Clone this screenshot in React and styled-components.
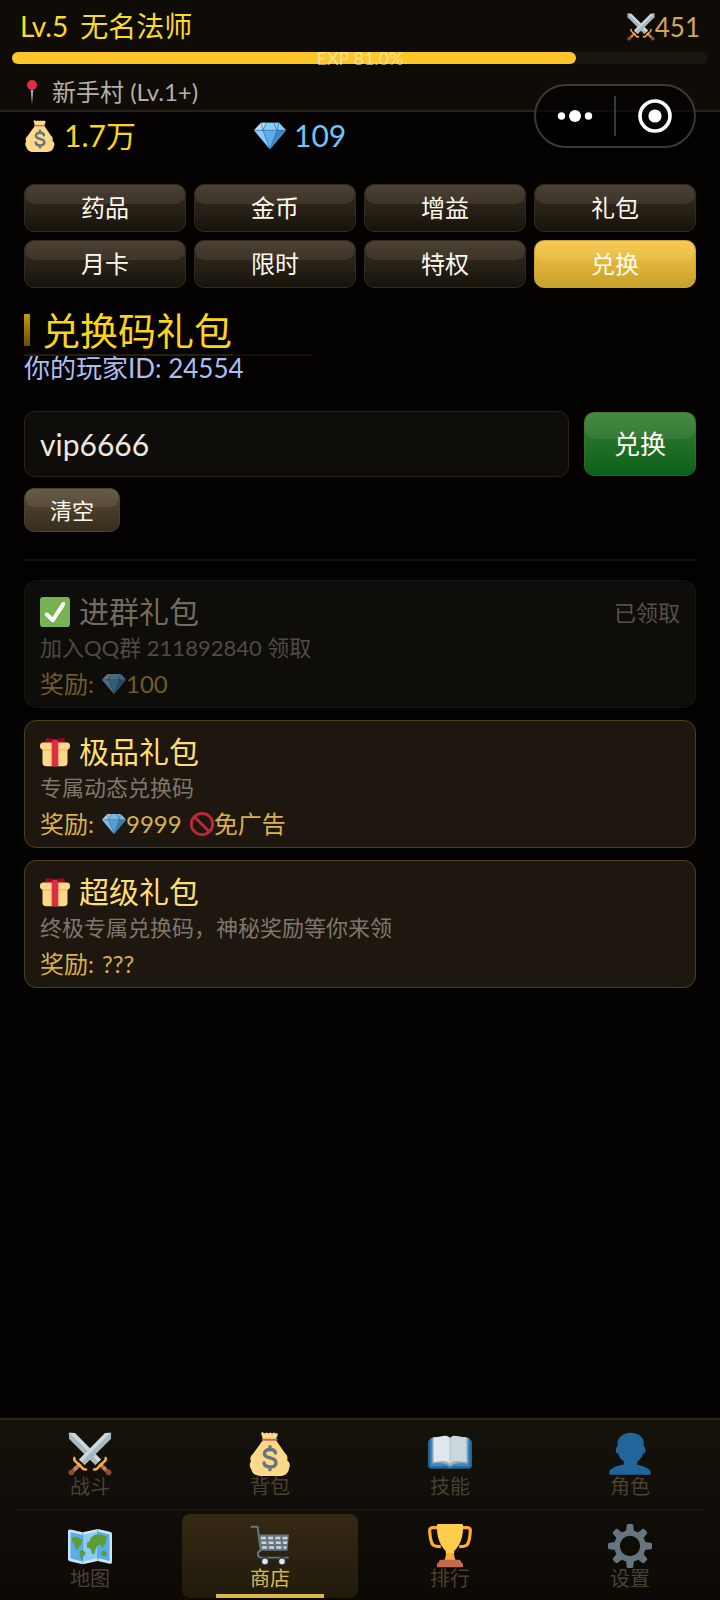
import { useState } from "react"
import styled, { createGlobalStyle, css } from "styled-components"

const GlobalStyle = createGlobalStyle`
  * {
    box-sizing: border-box;
  }

  body {
    margin: 0;
    background: #030201;
    font-family: Lato, 'Noto Sans CJK SC', sans-serif;
  }

  h1, h2, h3, p, ul {
    margin: 0;
    padding: 0;
    font-weight: 400;
  }

  button, input {
    font-family: inherit;
  }
`

const Sword = () => (
  <>
    <path fill="#8899A6" d="M.7.7 5.6.9 27 22.4 22.4 27 .9 5.6z" />
    <path fill="#CCD6DD" d="M.7.7 5.6.9 27 22.4l-2.3 2.3z" />
    <path fill="#AAB8C2" d="M.7.7 24.7 24.7 22.4 27 .9 5.6z" />
    <path fill="none" stroke="#BE6C52" strokeWidth="3.2" d="m25.8 25.8 6.6 6.6" />
    <path fill="none" stroke="#D99E82" strokeWidth="1" d="m26.4 28.6 2.2-2.2M28.6 30.8l2.2-2.2" />
    <path fill="none" stroke="#FFAC33" strokeWidth="2" strokeLinecap="round" d="M30.8 21.200c.6 1.800-.2 2.600-1.800 3.600l-3.800 3.600c-1 1.800-2 2.600-4 2.200" />
    <circle fill="#8A4B38" cx="33.2" cy="33" r="2.4" />
  </>
)

const drawings = {
  swords: (
    <>
      <Sword />
      <g transform="matrix(-1 0 0 1 36 0)"><Sword /></g>
    </>
  ),
  bag: (
    <>
      <path fill="#FDD888" d="M12.4 6.6 10.8 1.4c-.2-.9.8-1.5 1.6-.9l1.4.7L15.400.5l1.5.7 1.400-.7 1.500.7 1.500-.7 1.500.7c1-.5 1.800.1 1.500 1l-1.600 4.400c2.800 3.600 4.800 7 7.600 10.800 2.400 1.800 2.200 4.400 1.700 6 2.600 1.800 2.700 4.400 1.600 6.200-.4 4.400-3.800 6.400-7.400 6.400H10.200c-3.400 0-6.800-1.800-7.600-5.600-1.600-2-1.500-4.600-.2-6.200-1-2.500-.4-4.600 1.600-6.200C7 14.200 9.400 10.200 12.400 6.600z" />
      <path fill="none" stroke="#BF6952" strokeWidth="1.6" strokeLinecap="round" d="M12 6.300h11.400" />
      <path fill="none" stroke="#67757F" strokeWidth="2.800" strokeLinecap="round" d="M22.500 17.200c-.3-1.900-2.200-2.900-4.500-2.900-2.700 0-4.600 1.200-4.600 3.300 0 2.300 2.200 3 4.700 3.600 2.600.6 4.800 1.400 4.800 3.900 0 2.300-2 3.500-4.800 3.500-2.600 0-4.700-1-5-3.200M18 12v2M18 28.800v2" />
    </>
  ),
  gem: (
    <>
      <path fill="#5DADEC" d="M8 3h20l8 8.600L18 33 0 11.600z" />
      <path fill="#BDDDF4" d="M8 3 0 11.600h10zM8 3l2 8.600L14 3z" />
      <path fill="#8CCAF7" d="M14 3h8l4 8.600H10zM22 3h6l8 8.600H26z" />
      <path fill="#8CCAF7" d="M0 11.600h10L18 33z" />
      <path fill="#4289C1" d="M36 11.600H26L18 33z" />
      <path fill="none" stroke="#226699" strokeWidth=".7" d="M0 11.600h36M8 3l2 8.600L18 33l8-21.400L28 3M14 3l-4 8.600M22 3l4 8.600" />
    </>
  ),
  pin: (
    <>
      <path fill="#99AAB5" d="m16 15 2 21 2-21z" />
      <path fill="#66757F" d="m17.200 25 .8 11 .8-11z" />
      <circle fill="#DD2E44" cx="18" cy="7.500" r="7.500" />
    </>
  ),
  check: (
    <>
      <rect fill="#77B255" width="36" height="36" rx="4" />
      <path fill="#FFF" d="M29.280 6.362c-1.156-.751-2.704-.422-3.458.736L14.936 23.877l-5.029-4.650c-1.014-.938-2.596-.875-3.533.138-.937 1.014-.875 2.596.139 3.533l7.209 6.666c.48.445 1.090.665 1.696.665.673 0 1.534-.282 2.099-1.139.332-.506 12.500-19.270 12.500-19.270.751-1.159.421-2.707-.737-3.458z" />
    </>
  ),
  gift: (
    <>
      <path fill="#A0041E" d="M18 8C14 8.500 9 8.500 6.500 6.500 5.200 5 7 1.800 9.200 1c1.200-.3 1.700 1.200 3 1 1.600-.4 3.500-.8 5.800 3.500 2.300-4.300 4.200-3.900 5.800-3.500 1.300.2 1.800-1.300 3-1C29 1.800 30.800 5 29.500 6.500 27 8.500 22 8.500 18 8z" />
      <path fill="#FDD888" d="M3 11h30v20a4 4 0 0 1-4 4H7a4 4 0 0 1-4-4z" />
      <path fill="#FCAB40" d="M3 14h30v2H3z" />
      <rect fill="#FDD888" y="6.500" width="36" height="8.500" rx="4" />
      <path fill="#DA2F47" d="M14 6.500c1-4.500 7-4.500 8 0V35h-8z" />
    </>
  ),
  ban: (
    <path fill="none" stroke="#CF2840" strokeWidth="4.400" d="M6.500 7 29 29.500M34 18a16 16 0 1 1-32 0 16 16 0 0 1 32 0z" />
  ),
  book: (
    <>
      <rect fill="#226699" y="6" width="36" height="24" rx="3" />
      <path fill="#3B88C3" d="M2 5h32v23H20c-1 1.600-3 1.600-4 0H2z" />
      <path fill="#99AAB5" d="M3.500 4.500h29V26c-5-1-10-1-14.500 2-4.500-3-9.500-3-14.500-2z" />
      <path fill="#E1E8ED" d="M4.500 4.300C9 4.500 13 2.500 15.500 3.300c1.500.3 2.500 1.300 2.500 2.700v20c-4-4-9-1.500-13.500-1.500z" />
      <path fill="#CCD6DD" d="M31.500 4.300C27 4.500 23 2.500 20.500 3.300 19 3.600 18 4.600 18 6v20c4-4 9-1.500 13.500-1.500z" />
      <path fill="none" stroke="#AAB8C2" strokeWidth=".6" d="M18 5v22" />
    </>
  ),
  person: (
    <path fill="#226699" d="M24 26.799v-2.566c2-1.348 4.080-3.779 4.703-6.896.186.103.206.17.413.17.991 0 1.709-1.287 1.709-2.873 0-1.562-.823-2.827-1.794-2.865.187-.674.293-1.577.293-2.735C29.324 5.168 26 .527 18.541.527c-6.629 0-10.777 4.641-10.777 8.507 0 1.123.069 2.043.188 2.755-.911.137-1.629 1.352-1.629 2.845 0 1.587.804 2.873 1.796 2.873.206 0 .025-.067.209-.17C8.952 20.453 11 22.885 13 24.232v2.414c-5 .645-12 3.437-12 6.230v1.061C1 35 2.076 35 3.137 35h29.725C33.924 35 35 35 35 33.938v-1.061c0-2.615-6-5.225-11-6.078z" />
  ),
  map: (
    <>
      <path fill="#CCE4F3" d="M2 4.500 12 6.800 24.300 4l10 2.300c1 .3 1.700.9 1.700 2V31c0 1.200-.8 1.700-2 1.500l-9.700-2.200L12 33 1.500 30.500C.5 30.200 0 29.700 0 28.500V6c0-1.200.8-1.800 2-1.500z" />
      <path fill="#5DADEC" d="M2 6.500 12 9v21.600L2 28.200zM24.300 6.200 34 8.600v21.600l-9.700-2.300z" />
      <path fill="#8CCAF7" d="M12 9l12.300-2.800v21.700L12 30.600z" />
      <path fill="#5C9E31" d="M3.200 11c2.500-1 4.500-.3 6 .2l3.300 2.600-1.800 1 .8 1.700-2.500 2-1 3.200-2-1.500-.6-3.400-2.400-2.600zM9.600 21l3.600 1 1.300 2.200-2.300 2.600-.8 3-1.700-3.500zM15.500 15.500l2.200-1.300 1-3 3-2.200 2.600-.6 4 .5 4.200 1.700-1.600 2.300.3 2.800-2 1.600-1 3-1.600-3.500-2.300.5-1.600 3.200-1.200 4.300-1.800-.2-1-4-3.200-1.500zM27.500 22.500l2.600-.8 1.800 2.300-.8 2.600-2.800-.7-1.200-1.400z" />
      <path fill="none" stroke="#3B88C3" strokeWidth=".5" d="M12 7v26M24.300 4v26" />
    </>
  ),
  cart: (
    <>
      <path fill="none" stroke="#66757F" strokeWidth="1.600" strokeLinejoin="round" d="M2.200 2.200h5.600l2.600 19.500c-3 .7-3.400 5.600.6 5.800h22.300" />
      <path fill="#66757F" d="M8.700 8.500h24.800l-1.200 13.300H10.500z" />
      <path fill="none" stroke="#CCD6DD" strokeWidth="2.100" strokeDasharray="4 1.900" d="M10.600 11.400h21.800M11 15.400h21M11.400 19.300h20" />
      <circle fill="#E1E8ED" stroke="#292F33" strokeWidth="1.200" cx="13.900" cy="30.600" r="2.900" />
      <circle fill="#E1E8ED" stroke="#292F33" strokeWidth="1.200" cx="27.800" cy="30.600" r="2.900" />
    </>
  ),
  trophy: (
    <>
      <path fill="none" stroke="#FFAC33" strokeWidth="2.600" d="M9.500 3H3.800C2 3 1.200 4 1.400 6c.3 5 1 9 2.600 11 1 1.200 2.600 1.500 6.500 1.500M26.500 3h5.700c1.800 0 2.600 1 2.400 3-.3 5-1 9-2.600 11-1 1.200-2.600 1.500-6.500 1.500" />
      <path fill="#FFAC33" d="M15 20h6c0 4 .3 7 1.800 10h-9.600c1.500-3 1.800-6 1.800-10z" />
      <path fill="#FFCC4D" d="M7.300 1.200C7.300.4 8 0 9 0h18c1 0 1.700.4 1.700 1.200C29 12 25.500 18 21.500 22v2h-7v-2C10.500 18 7 12 7.300 1.200z" />
      <path fill="#C1694F" d="M11 29.300h14c1.400 0 2.200.8 2.200 2.300 1 .3 1.500 1 1.500 2v1.700H7.300v-1.700c0-1 .5-1.700 1.500-2 0-1.500.8-2.300 2.200-2.300z" />
    </>
  ),
  gear: (
    <>
      <circle fill="none" stroke="#66757F" strokeWidth="4.600" cx="18" cy="18" r="10.600" />
      {[0, 45, 90, 135, 180, 225, 270, 315].map((angle) => (
        <path key={angle} fill="#66757F" transform={`rotate(${angle} 18 18)`} d="M14.600 7.500 15.300 1.300C15.400.4 16 0 16.600 0h2.800c.6 0 1.200.4 1.300 1.300l.7 6.200z" />
      ))}
    </>
  ),
}

const Emoji = ({ name, size }) => (
  <EmojiSvg viewBox="0 0 36 36" width={size} height={size} aria-hidden="true">
    {drawings[name]}
  </EmojiSvg>
)

const tabs = ['药品', '金币', '增益', '礼包', '月卡', '限时', '特权', '兑换']

const gifts = [
  { name: '进群礼包', desc: '加入QQ群 211892840 领取', gem: '100', claimed: true },
  { name: '极品礼包', desc: '专属动态兑换码', gem: '9999', noAds: true },
  { name: '超级礼包', desc: '终极专属兑换码，神秘奖励等你来领' },
]

const navRows = [
  [['swords', '战斗'], ['bag', '背包'], ['book', '技能'], ['person', '角色']],
  [['map', '地图'], ['cart', '商店'], ['trophy', '排行'], ['gear', '设置']],
]

const GiftCard = ({ gift }) => (
  <Card $claimed={gift.claimed}>
    <CardHead>
      <Emoji name={gift.claimed ? 'check' : 'gift'} size={30} />
      <CardName $claimed={gift.claimed}>{gift.name}</CardName>
      {gift.claimed && <CardState>已领取</CardState>}
    </CardHead>
    <CardDesc $claimed={gift.claimed}>{gift.desc}</CardDesc>
    <Reward $claimed={gift.claimed}>
      <span>奖励:</span>
      {gift.gem ? (
        <RewardItem><Emoji name="gem" size={24} />{gift.gem}</RewardItem>
      ) : (
        <RewardItem>???</RewardItem>
      )}
      {gift.noAds && <RewardItem><Emoji name="ban" size={24} />免广告</RewardItem>}
    </Reward>
  </Card>
)

const App = () => {
  const [tab, setTab] = useState('兑换')
  const [page, setPage] = useState('商店')
  const [code, setCode] = useState('vip6666')
  const exp = 81

  const handleSubmit = (e) => {
    e.preventDefault()
  }

  return (
    <Screen>
      <GlobalStyle />
      <Header>
        <PlayerRow>
          <PlayerName><span>Lv.5</span> <span>无名法师</span></PlayerName>
          <Power><Emoji name="swords" size={28} />451</Power>
        </PlayerRow>
        <ExpBar>
          <ExpFill style={{ width: `${exp}%` }} />
          <ExpText>EXP {exp.toFixed(1)}%</ExpText>
        </ExpBar>
        <Place><Emoji name="pin" size={24} />新手村 (Lv.1+)</Place>
      </Header>

      <Capsule>
        <CapsuleButton type="button" aria-label="更多">
          <svg width="36" height="36" viewBox="0 0 36 36" fill="#fff">
            <circle cx="4.500" cy="18" r="3.700" />
            <circle cx="18" cy="18" r="6" />
            <circle cx="31.500" cy="18" r="3.700" />
          </svg>
        </CapsuleButton>
        <CapsuleLine />
        <CapsuleButton type="button" aria-label="关闭">
          <svg width="36" height="36" viewBox="0 0 36 36" fill="#fff">
            <circle cx="18" cy="18" r="15" fill="none" stroke="#fff" strokeWidth="3.600" />
            <circle cx="18" cy="18" r="6.600" />
          </svg>
        </CapsuleButton>
      </Capsule>

      <Main>
        <Wallet>
          <Coins><Emoji name="bag" size={32} /><span>1.7万</span></Coins>
          <Coins $gem><Emoji name="gem" size={32} /><span>109</span></Coins>
        </Wallet>

        <Tabs>
          {tabs.map((name) => (
            <TabButton key={name} type="button" $active={name === tab} onClick={() => setTab(name)}>
              {name}
            </TabButton>
          ))}
        </Tabs>

        <Title>兑换码礼包</Title>
        <PlayerId>你的玩家ID: 24554</PlayerId>

        <CodeForm onSubmit={handleSubmit}>
          <CodeInput
            type="text"
            aria-label="兑换码"
            value={code}
            onChange={(e) => setCode(e.target.value)}
          />
          <RedeemButton type="submit">兑换</RedeemButton>
        </CodeForm>
        <ClearButton type="button" onClick={() => setCode('')}>清空</ClearButton>

        <Divider />

        <Cards>
          {gifts.map((gift) => <GiftCard key={gift.name} gift={gift} />)}
        </Cards>
      </Main>

      <Nav>
        {navRows.map((row) => (
          <NavRow key={row[0][0]}>
            {row.map(([icon, label]) => (
              <NavButton key={label} type="button" $active={label === page} onClick={() => setPage(label)}>
                <Emoji name={icon} size={44} />
                <span>{label}</span>
              </NavButton>
            ))}
          </NavRow>
        ))}
      </Nav>
    </Screen>
  )
}

const EmojiSvg = styled.svg`
  display: block;
  flex: none;
`

const Screen = styled.div`
  display: flex;
  flex-direction: column;
  min-height: 100vh;
  background: #030201;
`

const Header = styled.header`
  padding: 8px 12px 2px;
  background: #0f0b06;
  border-bottom: 2px solid #2a2016;
`

const PlayerRow = styled.div`
  display: flex;
  align-items: center;
  justify-content: space-between;
  height: 38px;
  padding: 0 8px;
  margin-bottom: 6px;
`

const PlayerName = styled.h1`
  display: flex;
  gap: 12px;
  padding-bottom: 2px;
  font-size: 28px;
  line-height: 36px;
  color: #fbdb24;
`

const Power = styled.div`
  display: flex;
  align-items: center;
  font-size: 26px;
  line-height: 38px;
  color: #cfa75c;
`

const ExpBar = styled.div`
  position: relative;
  height: 12px;
  margin-bottom: 12px;
  border-radius: 6px;
  background: #1a160f;
`

const ExpFill = styled.div`
  height: 100%;
  border-radius: 6px;
  background: #ffc629;
`

const ExpText = styled.span`
  position: absolute;
  inset: 0;
  font-size: 18px;
  line-height: 12px;
  text-align: center;
  color: rgba(255, 248, 225, 0.6);
`

const Place = styled.p`
  display: flex;
  align-items: center;
  gap: 8px;
  padding: 0 8px;
  font-size: 24px;
  line-height: 32px;
  color: #b8afa4;
`

const Capsule = styled.div`
  position: absolute;
  top: 84px;
  right: 24px;
  display: flex;
  align-items: center;
  width: 162px;
  height: 64px;
  border: 2px solid #3b3937;
  border-radius: 32px;
  background: rgba(0, 0, 0, 0.6);
`

const CapsuleButton = styled.button`
  display: flex;
  flex: 1;
  justify-content: center;
  padding: 0;
  border: none;
  background: none;
`

const CapsuleLine = styled.span`
  width: 2px;
  height: 40px;
  background: #3b3937;
`

const Main = styled.main`
  flex: 1;
  padding: 0 24px 24px;
`

const Wallet = styled.div`
  display: grid;
  grid-template-columns: repeat(3, 1fr);
  gap: 18px;
  height: 48px;
  margin-bottom: 24px;
`

const Coins = styled.div`
  display: flex;
  align-items: center;
  gap: 8px;
  font-size: 30px;
  line-height: 40px;
  color: ${({ $gem }) => ($gem ? '#72c3f8' : '#f9d423')};

  span {
    padding-bottom: 3px;
  }
`

const Tabs = styled.div`
  display: grid;
  grid-template-columns: repeat(4, 1fr);
  gap: 8px;
`

const glossy = css`
  position: relative;
  padding: 0;
  border: 1px solid #322a1c;
  border-radius: 10px;
  color: #fffaf0;

  &::before {
    content: '';
    position: absolute;
    inset: 0 0 58%;
    border-radius: 9px 9px 10px 10px;
    background: rgba(255, 255, 255, 0.08);
  }
`

const TabButton = styled.button`
  ${glossy}
  height: 48px;
  font-size: 24px;
  line-height: 32px;
  background: linear-gradient(#3d3122, #15120b) border-box;
  ${({ $active }) => $active && css`
    border-color: #c9a337;
    background: linear-gradient(#fac746, #c6a02a) border-box;
  `}
`

const Title = styled.h2`
  position: relative;
  display: flex;
  align-items: center;
  gap: 12px;
  width: fit-content;
  margin-top: 20px;
  padding-bottom: 2px;
  font-size: 38px;
  line-height: 44px;
  color: #fdd41c;
  border-bottom: 2px solid #1b160b;

  &::before {
    content: '';
    width: 6px;
    height: 32px;
    background: linear-gradient(#c09c05, #6b4b08);
  }

  &::after {
    content: '';
    position: absolute;
    top: 100%;
    left: 0;
    width: 288px;
    height: 2px;
    background: rgba(120, 95, 40, 0.15);
  }
`

const PlayerId = styled.p`
  font-size: 26px;
  line-height: 24px;
  color: #b0bdf0;
`

const CodeForm = styled.form`
  display: flex;
  gap: 15px;
  margin-top: 32px;
`

const CodeInput = styled.input`
  flex: 1;
  min-width: 0;
  height: 66px;
  margin: -1px 0;
  padding: 0 15px;
  font-size: 30px;
  color: #ece7dd;
  background: #0f0d09;
  border: 1px solid #292319;
  border-radius: 10px;
  outline: none;
`

const RedeemButton = styled.button`
  ${glossy}
  width: 112px;
  height: 64px;
  padding-bottom: 3px;
  font-size: 26px;
  background: linear-gradient(#368031, #0b5f1b) border-box;
  border-color: rgba(90, 110, 40, 0.4);
`

const ClearButton = styled.button`
  ${glossy}
  display: block;
  width: 96px;
  height: 44px;
  padding-bottom: 3px;
  margin-top: 12px;
  font-size: 22px;
  background: linear-gradient(#5c4d36, #352c1c) border-box;
  border-color: #4b4029;
`

const Divider = styled.hr`
  height: 2px;
  margin: 27px 0 19px;
  border: none;
  background: #12100d;
`

const Cards = styled.div`
  display: grid;
  gap: 12px;
`

const Card = styled.article`
  height: 128px;
  padding: 11px 15px 0;
  border: 1px solid ${({ $claimed }) => ($claimed ? '#171511' : '#4c4014')};
  border-radius: 12px;
  background: ${({ $claimed }) => ($claimed ? '#0f0d09' : '#1d170f')};
`

const CardHead = styled.div`
  display: flex;
  align-items: center;
  gap: 9px;
  height: 40px;
`

const CardName = styled.h3`
  flex: 1;
  padding-bottom: 3px;
  font-size: 30px;
  line-height: 38px;
  color: ${({ $claimed }) => ($claimed ? '#746b5e' : '#ffdf70')};
`

const CardState = styled.span`
  padding-bottom: 3px;
  font-size: 22px;
  color: #565048;
`

const CardDesc = styled.p`
  font-size: 22px;
  line-height: 32px;
  color: ${({ $claimed }) => ($claimed ? '#4f4a43' : '#80776b')};
`

const Reward = styled.p`
  display: flex;
  align-items: center;
  gap: 8px;
  font-size: 24px;
  line-height: 40px;
  color: ${({ $claimed }) => ($claimed ? '#745a2c' : '#deb04c')};

  svg {
    opacity: ${({ $claimed }) => ($claimed ? 0.5 : 0.9)};
  }
`

const RewardItem = styled.span`
  display: flex;
  align-items: center;
`

const Nav = styled.nav`
  position: sticky;
  bottom: 0;
  padding: 2px 0;
  border-top: 2px solid #29231a;
  background: linear-gradient(#15110b, #0d0a06);
`

const NavRow = styled.div`
  display: grid;
  grid-template-columns: repeat(4, 1fr);

  & + &::before {
    content: '';
    grid-column: 1 / -1;
    height: 2px;
    margin: 3px 16px;
    background: #1a1610;
  }
`

const NavButton = styled.button`
  position: relative;
  display: flex;
  flex-direction: column;
  align-items: center;
  height: 84px;
  margin: 0 2px;
  padding: 10px 0 0;
  border: none;
  border-radius: 8px;
  font-size: 20px;
  line-height: 20px;
  color: #4a4130;
  background: none;

  ${({ $active }) => $active && css`
    color: #dcb850;
    background: linear-gradient(#352914, #211a0c);

    &::after {
      content: '';
      position: absolute;
      bottom: 0;
      left: 34px;
      right: 34px;
      height: 4px;
      background: #d9b64c;
    }
  `}
`

export default App
